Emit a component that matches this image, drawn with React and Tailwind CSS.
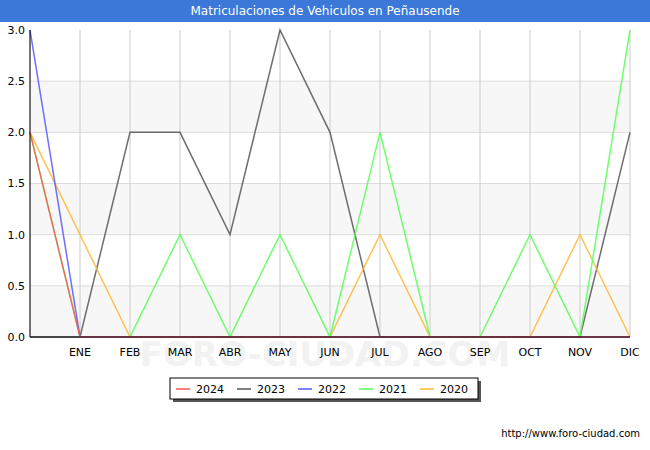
const X0 = 30, DX = 50, Y0 = 337, YS = 102.33;
const months = ['', 'ENE', 'FEB', 'MAR', 'ABR', 'MAY', 'JUN', 'JUL', 'AGO', 'SEP', 'OCT', 'NOV', 'DIC'];
const series = [
  { name: '2023', color: '#555555', data: [0, 0, 2, 2, 1, 3, 2, 0, 0, 0, 0, 0, 2] },
  { name: '2020', color: '#ffb833', data: [2, 1, 0, 0, 0, 0, 0, 1, 0, 0, 0, 1, 0] },
  { name: '2021', color: '#55ff55', data: [2, 0, 0, 1, 0, 1, 0, 2, 0, 0, 1, 0, 3] },
  { name: '2022', color: '#5555ff', data: [3, 0, 0, 0, 0, 0, 0, 0, 0, 0, 0, 0, 0] },
  { name: '2024', color: '#ff5555', data: [2, 0, 0, 0, 0, 0, 0, 0, 0, 0, 0, 0, 0] },
];
const legend = ['2024', '2023', '2022', '2021', '2020'];

export default function App() {
  return (
    <div className="w-[650px] h-[450px] bg-white relative" style={{ fontFamily: '"DejaVu Sans", sans-serif' }}>
      <div className="h-[22px] bg-[#3b78d8] text-white text-[12px] flex items-center justify-center">
        Matriculaciones de Vehiculos en Peñausende
      </div>
      <svg width="650" height="428" viewBox="0 22 650 428" className="block">
        {[0, 1, 2, 3, 4, 5].map(i => (
          <rect key={i} x={X0} y={Y0 - (i + 1) * 51.17} width={600} height={51.17} fill={i % 2 === 0 ? '#f7f7f7' : '#ffffff'} />
        ))}
        {[1, 2, 3, 4, 5].map(i => (
          <line key={i} x1={X0} x2={630} y1={Y0 - i * 51.17} y2={Y0 - i * 51.17} stroke="#dddddd" />
        ))}
        {months.map((m, i) => (
          <line key={i} x1={X0 + i * DX} x2={X0 + i * DX} y1={30} y2={Y0} stroke="#cccccc" />
        ))}
        <text x="325" y="366" textAnchor="middle" fontSize="34" fill="#f2f2f2" fontWeight="bold">FORO-CIUDAD.COM</text>
        {series.map(s => (
          <polyline key={s.name} fill="none" stroke={s.color} strokeWidth="1.5" strokeOpacity="0.85"
            points={s.data.map((v, i) => `${X0 + i * DX},${Y0 - v * YS}`).join(' ')} />
        ))}
        <line x1={X0} x2={630} y1={Y0} y2={Y0} stroke="#000" />
        <line x1={X0} x2={X0} y1={30} y2={Y0} stroke="#000" />
        {['0.0', '0.5', '1.0', '1.5', '2.0', '2.5', '3.0'].map((t, i) => (
          <text key={t} x="25" y={Y0 - i * 51.17 + 4} textAnchor="end" fontSize="11" fill="#000">{t}</text>
        ))}
        {months.map((m, i) => (
          <text key={i} x={X0 + i * DX} y="356" textAnchor="middle" fontSize="11" fill="#000">{m}</text>
        ))}
        <rect x="173" y="381" width="308" height="21" fill="#555" />
        <rect x="170" y="378" width="308" height="21" fill="#fff" stroke="#000" />
        {legend.map((n, i) => {
          const s = series.find(x => x.name === n);
          const lx = 176 + i * 61;
          return (
            <g key={n}>
              <line x1={lx} x2={lx + 14} y1="389" y2="389" stroke={s.color} strokeWidth="1.5" />
              <text x={lx + 20} y="393" fontSize="11" fill="#000">{n}</text>
            </g>
          );
        })}
        <text x="640" y="437" textAnchor="end" fontSize="10" fill="#000">http://www.foro-ciudad.com</text>
      </svg>
    </div>
  );
}
